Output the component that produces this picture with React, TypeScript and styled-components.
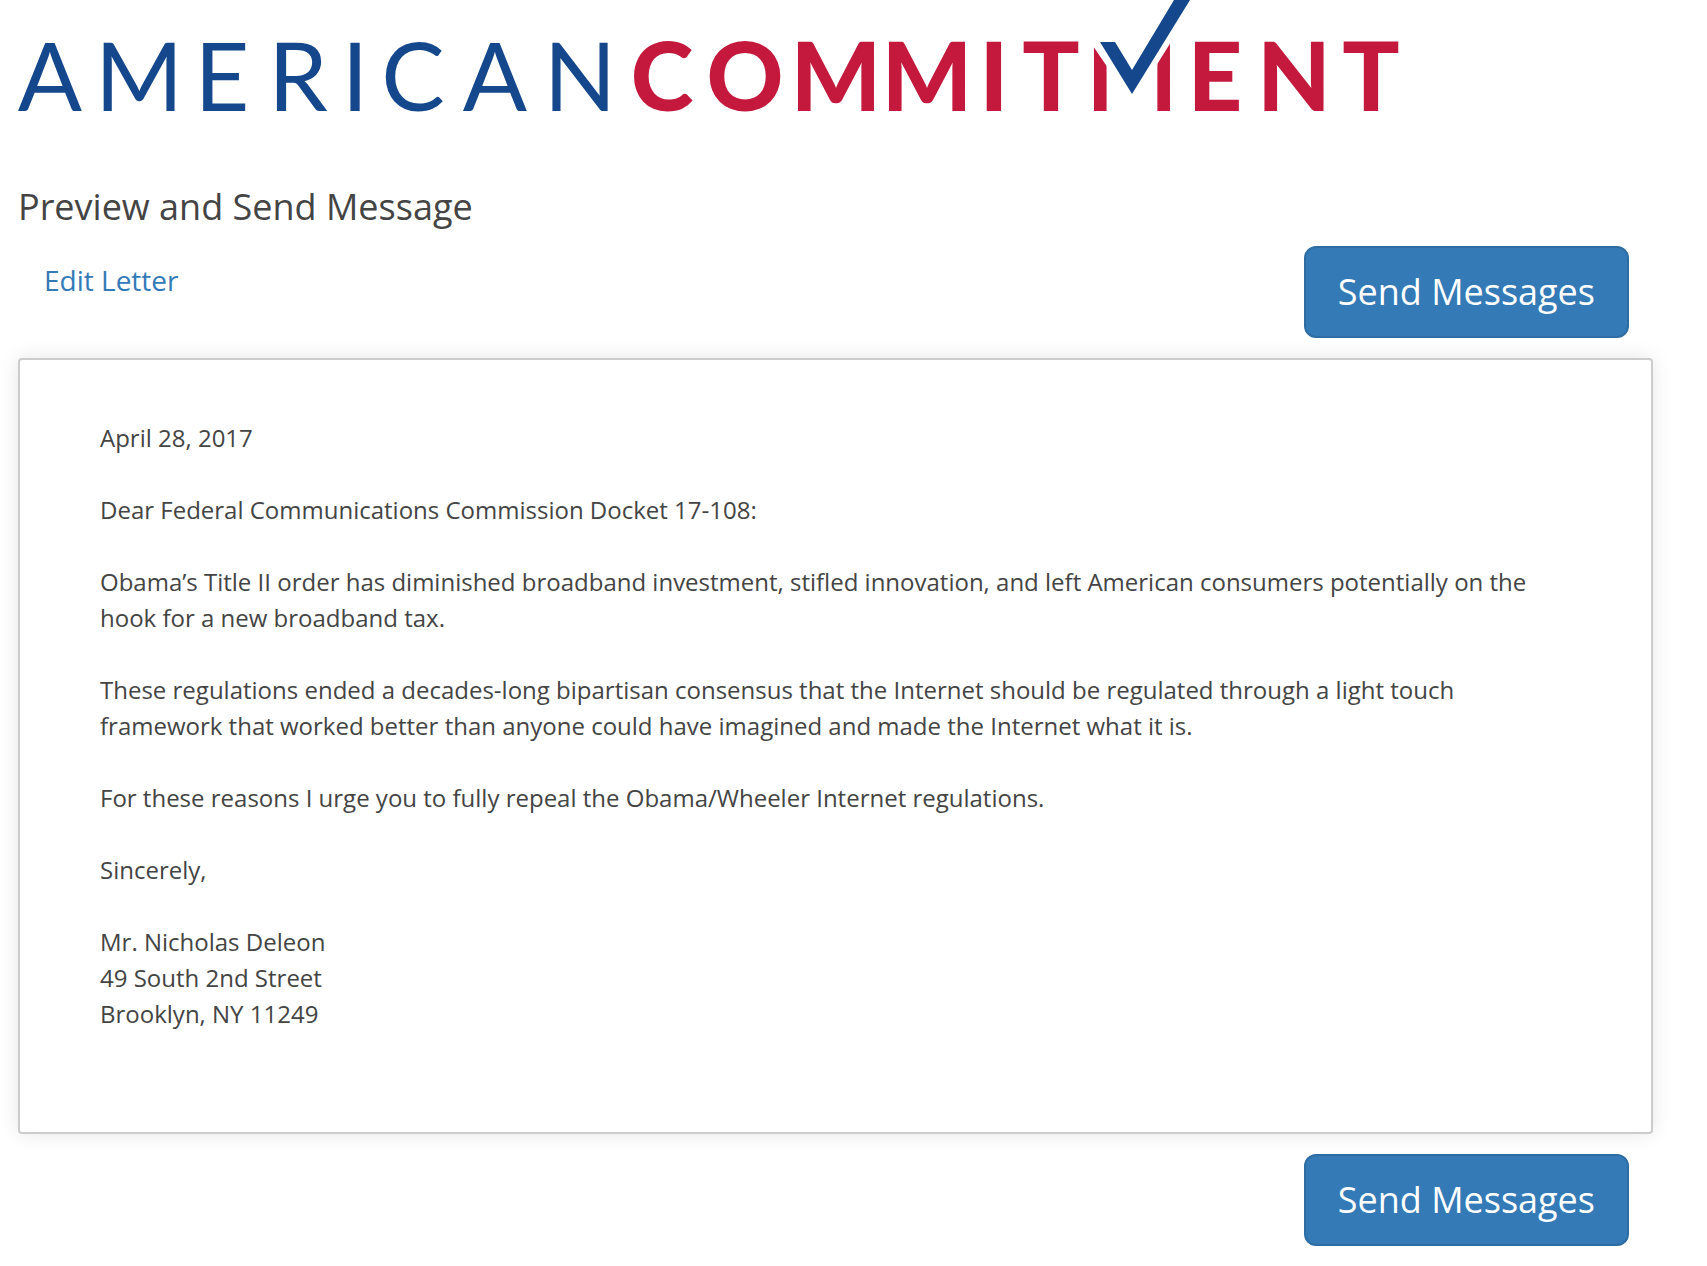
import React from "react";
import styled, { createGlobalStyle } from "styled-components";

const GlobalStyle = createGlobalStyle`
  *, *::before, *::after { box-sizing: border-box; }
  body {
    margin: 0;
    background: #fff;
    color: #444;
    font-family: "Open Sans", "Noto Sans", sans-serif;
    font-size: 24px;
    line-height: 36px;
  }
`;

const Page = styled.div`
  padding: 0 54px 20px 18px;
`;

const Header = styled.header`
  height: 180px;
`;

const Wordmark = styled.svg`
  display: block;
  width: 1400px;
  max-width: 100%;
  height: auto;
  font-family: Lato, sans-serif;
  font-size: 95px;
  text-anchor: middle;
`;

const Title = styled.h1`
  margin: 0 0 12px;
  font-size: 36px;
  font-weight: 400;
  line-height: 54px;
`;

const Toolbar = styled.div<{ $end?: boolean }>`
  display: flex;
  justify-content: ${(p) => (p.$end ? "flex-end" : "space-between")};
  align-items: flex-start;
  padding: 0 24px 0 26px;
`;

const EditLink = styled.a`
  padding-top: 14px;
  color: #337ab7;
  font-size: 28px;
  line-height: 40px;
  text-decoration: none;

  &:hover { text-decoration: underline; }
`;

const SendButton = styled.button`
  padding: 20px 32px;
  border: 2px solid #2e6da4;
  border-radius: 12px;
  background: #337ab7;
  color: #fff;
  font-family: inherit;
  font-size: 36px;
  line-height: 48px;
  cursor: pointer;

  &:hover { background: #286090; }
`;

const Letter = styled.article`
  margin: 20px 0;
  padding: 60px 80px 64px;
  border: 2px solid #ccc;
  border-radius: 4px;
  background: #fff;
  box-shadow: 0 0 20px rgba(0, 0, 0, 0.1);
`;

const Paragraph = styled.p`
  margin: 0 0 36px;
`;

const Address = styled.address`
  margin: 0 0 36px;
  font-style: normal;
`;

const BLUE = "#14478c";
const RED = "#c4183c";
const CHECK = "1100,42 1115,42 1132,70 1174,0 1190,0 1132,94";
// White gap round the check mark, which leaves only the two legs of the M.
const CHECK_GAP =
  "1084,34 1093,46 1108,68 1108,114 1156,114 1156,66 1176,34 1174,0 1132,60 1115,34";

function Logo() {
  return (
    <Wordmark viewBox="18 0 1400 130" role="img" aria-label="American Commitment">
      <text y="111" fill={BLUE} x="50 139 222 298 355 413 495 580">
        AMERICAN
      </text>
      <text y="111" fill={RED} fontWeight="900" x="662 745 836 927 994 1051 1132 1215 1294 1371">
        COMMITMENT
      </text>
      <polygon points={CHECK_GAP} fill="#fff" />
      <polygon points={CHECK} fill={BLUE} />
    </Wordmark>
  );
}

const body = [
  "April 28, 2017",
  "Dear Federal Communications Commission Docket 17-108:",
  "Obama’s Title II order has diminished broadband investment, stifled innovation, and left American consumers potentially on the hook for a new broadband tax.",
  "These regulations ended a decades-long bipartisan consensus that the Internet should be regulated through a light touch framework that worked better than anyone could have imagined and made the Internet what it is.",
  "For these reasons I urge you to fully repeal the Obama/Wheeler Internet regulations.",
  "Sincerely,",
];

export default function App() {
  return (
    <>
      <GlobalStyle />
      <Page>
        <Header>
          <Logo />
        </Header>
        <main>
          <Title>Preview and Send Message</Title>
          <Toolbar>
            <EditLink href="#edit">Edit Letter</EditLink>
            <SendButton type="button">Send Messages</SendButton>
          </Toolbar>
          <Letter>
            {body.map((text) => (
              <Paragraph key={text}>{text}</Paragraph>
            ))}
            <Address>
              Mr. Nicholas Deleon
              <br />
              49 South 2nd Street
              <br />
              Brooklyn, NY 11249
            </Address>
          </Letter>
          <Toolbar $end>
            <SendButton type="button">Send Messages</SendButton>
          </Toolbar>
        </main>
      </Page>
    </>
  );
}
